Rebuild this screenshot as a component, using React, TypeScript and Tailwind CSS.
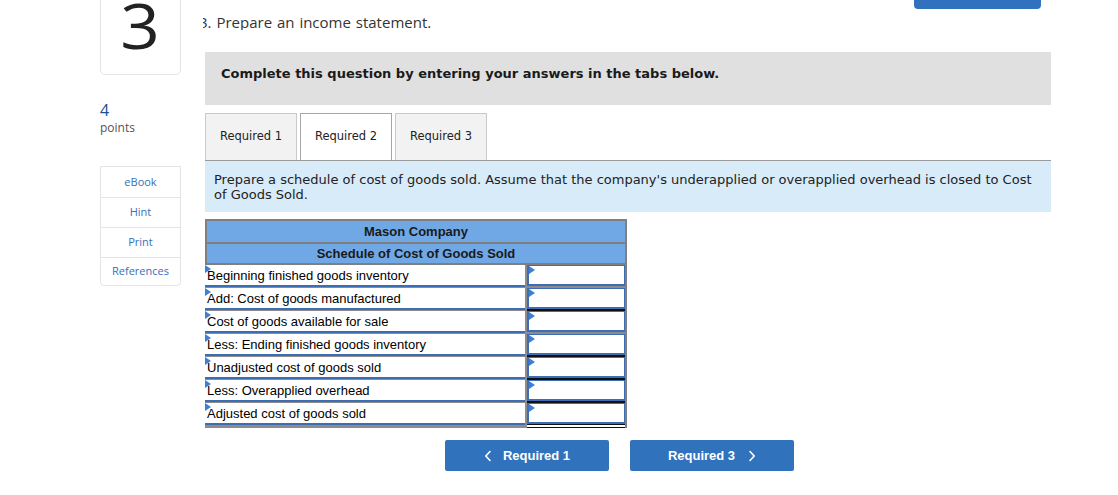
import React from 'react';

const verdana = { fontFamily: '"DejaVu Sans", Verdana, sans-serif' };
const arial = { fontFamily: '"Liberation Sans", Arial, sans-serif' };
const proxima = { fontFamily: '"Open Sans", "Noto Sans", sans-serif' };

type Row = { label: string; rule: 'none' | 'single' | 'double' };

const rows: Row[] = [
  { label: 'Beginning finished goods inventory', rule: 'none' },
  { label: 'Add: Cost of goods manufactured', rule: 'single' },
  { label: 'Cost of goods available for sale', rule: 'none' },
  { label: 'Less: Ending finished goods inventory', rule: 'single' },
  { label: 'Unadjusted cost of goods sold', rule: 'single' },
  { label: 'Less: Overapplied overhead', rule: 'single' },
  { label: 'Adjusted cost of goods sold', rule: 'double' },
];

const Marker = () => (
  <span className="absolute left-0 top-0 h-0 w-0 border-y-[4px] border-l-[6px] border-y-transparent border-l-[#3b7fd6]" />
);

const Chevron = ({ dir }: { dir: 'left' | 'right' }) => (
  <svg width="8" height="12" viewBox="0 0 8 12" fill="none">
    <path
      d={dir === 'left' ? 'M6 1.5 L1.8 6 L6 10.5' : 'M2 1.5 L6.2 6 L2 10.5'}
      stroke="white"
      strokeWidth="1.6"
      strokeLinecap="round"
      strokeLinejoin="round"
    />
  </svg>
);

const SideLinks = () => {
  const items = [
    { name: 'eBook', h: 'h-[30px]' },
    { name: 'Hint', h: 'h-[30px]' },
    { name: 'Print', h: 'h-[30px]' },
    { name: 'References', h: 'h-[28px]' },
  ];
  return (
    <div className="mt-[30px] flex flex-col rounded-b-[4px] border border-[#e4e4e4]">
      {items.map((it, i) => (
        <div
          key={it.name}
          className={`${it.h} flex items-center justify-center text-[11px] text-[#3571b8] ${i > 0 ? 'border-t border-[#e4e4e4]' : ''}`}
        >
          {it.name}
        </div>
      ))}
    </div>
  );
};

const Schedule = () => (
  <div className="mt-[7px] w-[422px]" style={arial}>
    <div className="border-x-2 border-y-2 border-[#7f7f7f] bg-[#70a8e6] text-[13px] font-bold text-[#1a1a1a]">
      <div className="flex h-[21px] items-center justify-center">Mason Company</div>
      <div className="flex h-[21px] items-center justify-center border-t-2 border-[#7f7f7f] pt-[1px]">
        Schedule of Cost of Goods Sold
      </div>
    </div>
    {rows.map((r) => (
      <div key={r.label} className="flex bg-[#8c8c8c]">
        <div className="relative h-[22px] w-[320px] border-b-2 border-[#3d6db4] bg-white pl-[2px] text-[13px] leading-[21px] text-black">
          <Marker />
          {r.label}
        </div>
        <div className="ml-[2px] flex w-[98px] flex-col">
          <div className="relative h-[21px] border border-b-2 border-l-2 border-[#3d6db4] bg-white">
            <Marker />
          </div>
          {r.rule === 'none' && <div className="h-[2px] bg-[#8c8c8c]" />}
          {r.rule === 'single' && <div className="h-[2px] bg-[#111]" />}
          {r.rule === 'double' && <div className="h-[4px] border-y border-[#111] bg-white" />}
        </div>
        <div className="w-[2px] bg-[#7f7f7f]" />
      </div>
    ))}
  </div>
);

export default function App() {
  return (
    <div className="h-[495px] w-[1118px] overflow-hidden bg-white">
      <div className="flex gap-[24px] pl-[100px]">
        {/* left rail */}
        <div className="w-[81px] shrink-0" style={proxima}>
          <div className="-mt-[20px] flex h-[95px] justify-center rounded-[5px] border border-[#e4e4e4] pt-[12px]">
            <span className="inline-block scale-x-110 text-[63px] font-normal leading-none text-[#222]">3</span>
          </div>
          <div className="mt-[25px] text-[16px] leading-[20px] text-[#21508f]">4</div>
          <div className="text-[12px] leading-[16px] text-[#555]">points</div>
          <SideLinks />
        </div>

        {/* main */}
        <div className="w-[846px] shrink-0">
          <div className="flex h-[9px] justify-end pr-[10px]">
            <div className="h-[9px] w-[127px] rounded-b-[4px] bg-[#3072bd]" />
          </div>
          <div className="-ml-[2px] mt-[1px] h-[20px] overflow-hidden whitespace-nowrap" style={proxima}>
            <span className="-ml-[4px] inline-block text-[15px] leading-[20px] text-[#333] [word-spacing:1px]">
              3. Prepare an income statement.
            </span>
          </div>

          <div className="mt-[22px] h-[53px] bg-[#e0e0e0] px-[16px] pt-[13px]" style={verdana}>
            <p className="text-[13px] font-bold leading-[17px] text-[#1a1a1a]">
              Complete this question by entering your answers in the tabs below.
            </p>
          </div>

          <div className="mt-[8px] flex gap-[3px]" style={verdana}>
            <div className="flex h-[47px] w-[92px] items-center justify-center border border-b-0 border-[#c9c9c9] bg-[#f2f2f2] text-[11.5px] text-[#222]">
              Required 1
            </div>
            <div className="flex h-[47px] w-[92px] items-center justify-center border border-b-0 border-[#a6a6a6] bg-white text-[11.5px] text-[#222]">
              Required 2
            </div>
            <div className="flex h-[47px] w-[92px] items-center justify-center border border-b-0 border-[#c9c9c9] bg-[#f2f2f2] text-[11.5px] text-[#222]">
              Required 3
            </div>
          </div>

          <div
            className="h-[52px] border-t border-[#9a9a9a] bg-[#d8ebf9] px-[9px] pt-[11px] text-[13px] leading-[15px] text-[#222]"
            style={verdana}
          >
            Prepare a schedule of cost of goods sold. Assume that the company's underapplied or overapplied overhead is
            closed to Cost of Goods Sold.
          </div>

          <Schedule />

          <div className="ml-[240px] mt-[12px] flex gap-[21px]" style={arial}>
            <button className="flex h-[31px] w-[164px] items-center justify-center gap-[11px] rounded-[2px] bg-[#3172bd] text-[13px] font-bold text-white">
              <Chevron dir="left" />
              Required 1
            </button>
            <button className="flex h-[31px] w-[164px] items-center justify-center gap-[13px] rounded-[2px] bg-[#3172bd] text-[13px] font-bold text-white">
              Required 3
              <Chevron dir="right" />
            </button>
          </div>
        </div>
      </div>
    </div>
  );
}
